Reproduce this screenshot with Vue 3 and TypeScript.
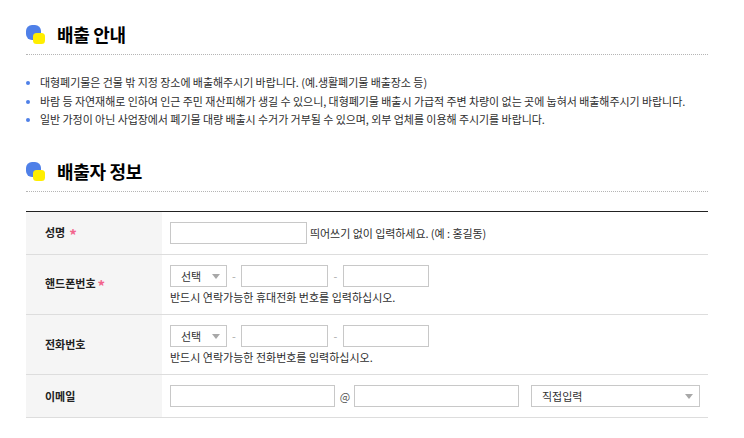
<template>
  <div class="page">
    <section class="block">
      <h2 class="title"><span class="mark"></span>배출 안내</h2>
      <ul class="notes">
        <li v-for="note in notes" :key="note">{{ note }}</li>
      </ul>
    </section>

    <section class="block second">
      <h2 class="title"><span class="mark"></span>배출자 정보</h2>
      <table class="form">
        <tbody>
          <tr class="short">
            <th>성명<i class="req wide">*</i></th>
            <td>
              <div class="line">
                <input class="w-name" type="text" />
                <span class="hint-inline">띄어쓰기 없이 입력하세요. (예 : 홍길동)</span>
              </div>
            </td>
          </tr>
          <tr v-for="row in phones" :key="row.label" class="tall">
            <th>{{ row.label }}<i v-if="row.required" class="req">*</i></th>
            <td>
              <div class="line">
                <label class="pick w-pick">
                  <select><option>선택</option></select>
                </label>
                <span class="dash">-</span>
                <input class="w-tel" type="text" />
                <span class="dash next">-</span>
                <input class="w-tel last" type="text" />
              </div>
              <p class="hint">{{ row.hint }}</p>
            </td>
          </tr>
          <tr class="short">
            <th>이메일</th>
            <td>
              <div class="line">
                <input class="w-mail" type="text" />
                <span class="at">@</span>
                <input class="w-mail" type="text" />
                <label class="pick w-domain">
                  <select><option>직접입력</option></select>
                </label>
              </div>
            </td>
          </tr>
        </tbody>
      </table>
    </section>
  </div>
</template>

<script setup lang="ts">
const notes: string[] = [
  '대형폐기물은 건물 밖 지정 장소에 배출해주시기 바랍니다. (예.생활폐기물 배출장소 등)',
  '바람 등 자연재해로 인하여 인근 주민 재산피해가 생길 수 있으니, 대형폐기물 배출시 가급적 주변 차량이 없는 곳에 눕혀서 배출해주시기 바랍니다.',
  '일반 가정이 아닌 사업장에서 폐기물 대량 배출시 수거가 거부될 수 있으며, 외부 업체를 이용해 주시기를 바랍니다.',
]

const phones = [
  { label: '핸드폰번호', required: true, hint: '반드시 연락가능한 휴대전화 번호를 입력하십시오.' },
  { label: '전화번호', required: false, hint: '반드시 연락가능한 전화번호를 입력하십시오.' },
]
</script>

<style>
body {
  background: #fff;
}
</style>

<style scoped>
.page {
  width: 682px;
  height: 438px;
  overflow: hidden;
  margin-left: 26px;
  padding-top: 22px;
  box-sizing: border-box;
  font-family: "Noto Sans CJK KR", "Noto Sans", sans-serif;
  font-size: 11px;
  color: #2e2e2e;
}

.second {
  margin-top: 30px;
}

.title {
  display: flex;
  align-items: center;
  height: 24px;
  margin: 0;
  padding-bottom: 8px;
  border-bottom: 1px dotted #b5b5b5;
  font-size: 18px;
  font-weight: 700;
  color: #000;
  letter-spacing: -0.3px;
}

.mark {
  position: relative;
  width: 15px;
  height: 15px;
  margin-right: 16px;
  margin-bottom: 3px;
  flex: none;
  border-radius: 6px;
  background: #4f80e8;
}

.mark::after {
  content: "";
  position: absolute;
  left: 7px;
  top: 8px;
  width: 12px;
  height: 11px;
  border-radius: 3.5px;
  background: #ffee00;
}

.notes {
  list-style: none;
  margin: 18px 0 0;
  padding: 0;
  letter-spacing: -0.06px;
}

.notes li {
  position: relative;
  height: 18.5px;
  line-height: 18px;
  padding-left: 14px;
}

.notes li::before {
  content: "";
  position: absolute;
  left: 0;
  top: 8px;
  width: 4px;
  height: 4px;
  border-radius: 50%;
  background: #4f80e8;
}

.form {
  width: 100%;
  margin-top: 19px;
  border-collapse: collapse;
  border-top: 1px solid #222;
}

.form tr {
  border-bottom: 1px solid #ddd;
}

.short {
  height: 43px;
}

.tall {
  height: 60px;
}

.form th {
  width: 136px;
  padding: 0 0 0 19px;
  box-sizing: border-box;
  background: #f5f5f5;
  text-align: left;
  font-weight: 700;
  color: #222;
}

.form td {
  padding: 0 0 0 8px;
  vertical-align: middle;
}

.tall td {
  padding-top: 1px;
}

.req {
  display: inline-block;
  margin-left: 2px;
  font-size: 15px;
  line-height: 1;
  vertical-align: -4px;
  font-style: normal;
  font-weight: 700;
  color: #f2648c;
}

.req.wide {
  margin-left: 4px;
}

.line {
  display: flex;
  align-items: center;
}

input,
select {
  height: 22px;
  box-sizing: border-box;
  border: 1px solid #c8c8c8;
  border-radius: 0;
  background: #fff;
  outline: none;
  font: inherit;
  color: #333;
}

.pick {
  position: relative;
  display: block;
}

.pick select {
  width: 100%;
  padding: 0 0 0 10px;
  appearance: none;
}

.pick::after {
  content: "";
  position: absolute;
  right: 7px;
  top: 9px;
  border-left: 4px solid transparent;
  border-right: 4px solid transparent;
  border-top: 5px solid #a8a8a8;
  pointer-events: none;
}

.w-name {
  width: 137px;
}

.w-pick {
  width: 57px;
}

.w-tel {
  width: 87px;
}

.w-tel.last {
  width: 86px;
}

.w-mail {
  width: 165px;
}

.w-domain {
  width: 169px;
  margin-left: 12px;
}

.dash {
  width: 14px;
  text-align: center;
  color: #aaa;
}

.dash.next {
  width: 15px;
}

.at {
  width: 19px;
  padding-left: 1px;
  box-sizing: border-box;
  text-align: center;
  color: #555;
}

.hint-inline {
  margin-left: 3px;
  letter-spacing: -0.06px;
}

.hint {
  margin: 2px 0 0;
  line-height: 16px;
}
</style>
